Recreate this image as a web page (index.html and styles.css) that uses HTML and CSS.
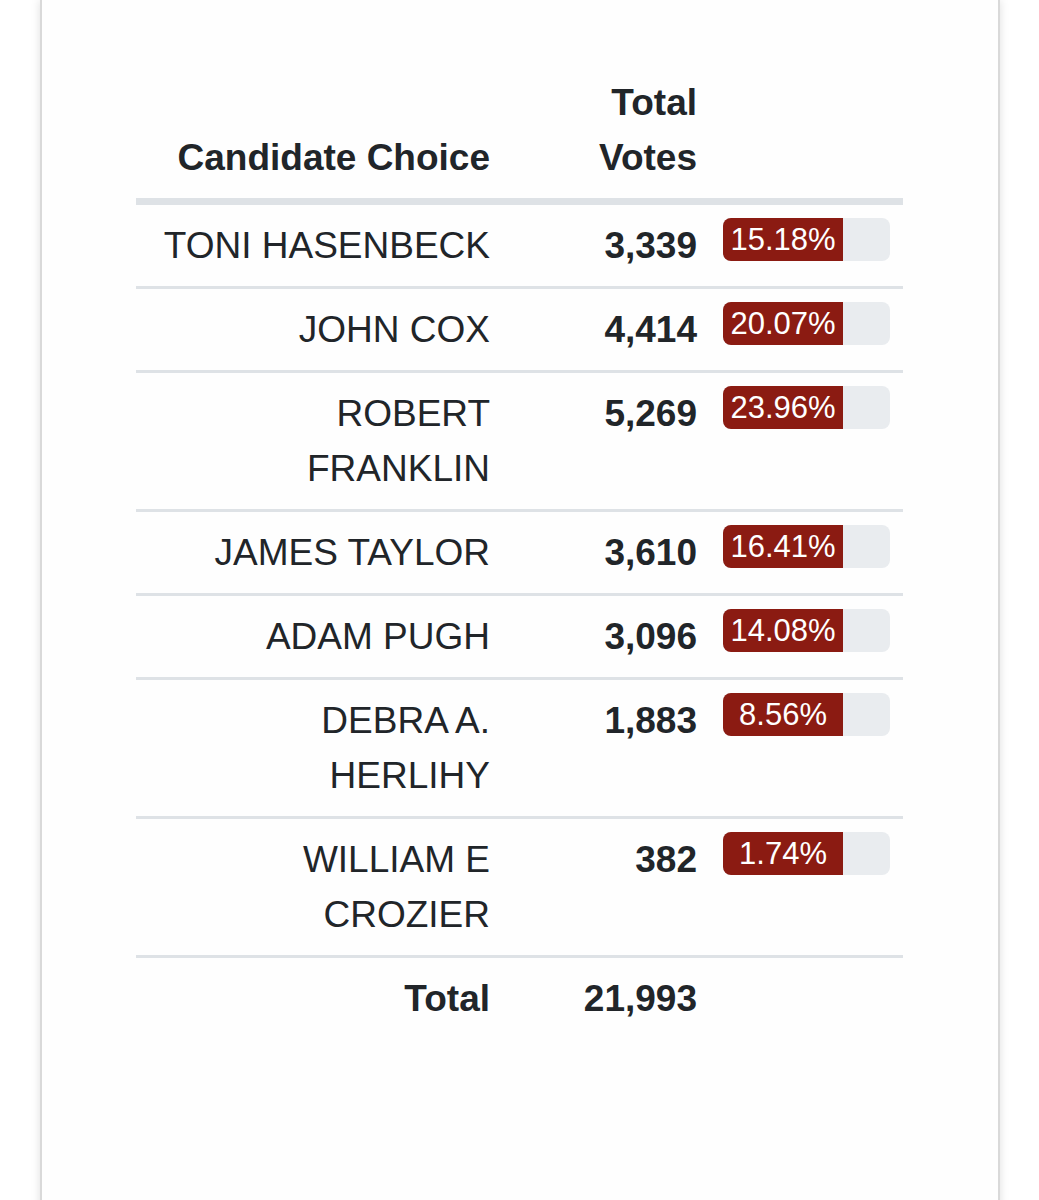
FILE: index.html
```html
<!DOCTYPE html>
<html lang="en">
<head>
<meta charset="utf-8">
<title>Candidate Choice Results</title>
<link rel="stylesheet" href="styles.css">
</head>
<body>
<div class="card">
  <table class="results">
    <colgroup>
      <col class="col-name">
      <col class="col-votes">
      <col class="col-bar">
    </colgroup>
    <thead>
      <tr>
        <th class="name">Candidate Choice</th>
        <th class="votes">Total Votes</th>
        <th class="bar"></th>
      </tr>
    </thead>
    <tbody>
      <tr>
        <td class="name">TONI HASENBECK</td>
        <td class="votes">3,339</td>
        <td class="bar"><div class="progress"><div class="progress-fill" style="width:15.18%">15.18%</div></div></td>
      </tr>
      <tr>
        <td class="name">JOHN COX</td>
        <td class="votes">4,414</td>
        <td class="bar"><div class="progress"><div class="progress-fill" style="width:20.07%">20.07%</div></div></td>
      </tr>
      <tr>
        <td class="name">ROBERT FRANKLIN</td>
        <td class="votes">5,269</td>
        <td class="bar"><div class="progress"><div class="progress-fill" style="width:23.96%">23.96%</div></div></td>
      </tr>
      <tr>
        <td class="name">JAMES TAYLOR</td>
        <td class="votes">3,610</td>
        <td class="bar"><div class="progress"><div class="progress-fill" style="width:16.41%">16.41%</div></div></td>
      </tr>
      <tr>
        <td class="name">ADAM PUGH</td>
        <td class="votes">3,096</td>
        <td class="bar"><div class="progress"><div class="progress-fill" style="width:14.08%">14.08%</div></div></td>
      </tr>
      <tr>
        <td class="name">DEBRA A. HERLIHY</td>
        <td class="votes">1,883</td>
        <td class="bar"><div class="progress"><div class="progress-fill" style="width:8.56%">8.56%</div></div></td>
      </tr>
      <tr>
        <td class="name">WILLIAM E CROZIER</td>
        <td class="votes">382</td>
        <td class="bar"><div class="progress"><div class="progress-fill" style="width:1.74%">1.74%</div></div></td>
      </tr>
    </tbody>
    <tfoot>
      <tr>
        <td class="name total-label">Total</td>
        <td class="votes">21,993</td>
        <td class="bar"></td>
      </tr>
    </tfoot>
  </table>
</div>
</body>
</html>
```
FILE: styles.css
```css
html, body {
  margin: 0;
  padding: 0;
  background: #ffffff;
}

body {
  font-family: "Liberation Sans", Arial, Helvetica, sans-serif;
  color: #212529;
  overflow: hidden;
}

.card {
  box-sizing: border-box;
  width: 960px;
  min-height: 1220px;
  margin-left: 40px;
  padding-top: 62px;
  background: #fefefe;
  border-left: 2px solid #d9d9d9;
  border-right: 2px solid #d9d9d9;
  box-shadow: 0 0 9px rgba(0, 0, 0, 0.13);
}

.results {
  table-layout: fixed;
  border-collapse: separate;
  border-spacing: 0;
  width: 767px;
  margin-left: 94px;
  font-size: 37px;
  line-height: 55px;
}

.col-name { width: 367px; }
.col-votes { width: 207px; }
.col-bar { width: 193px; }

.results th,
.results td {
  padding: 13px;
  vertical-align: top;
}

.results th {
  font-weight: 700;
  vertical-align: bottom;
  border-bottom: 7px solid #dee2e6;
}

.results tbody tr + tr td,
.results tfoot td {
  border-top: 3px solid #dee2e6;
}

.results .name {
  text-align: right;
  padding-left: 25px;
}

td.votes,
th.votes {
  text-align: right;
  font-weight: 700;
}

.total-label {
  font-weight: 700;
}

.progress {
  display: flex;
  height: 43px;
  background: #e9ecef;
  border-radius: 8px;
  overflow: hidden;
}

.progress-fill {
  min-width: 120px;
  height: 43px;
  background: #8b1b12;
  color: #ffffff;
  font-size: 31px;
  line-height: 43px;
  text-align: center;
  white-space: nowrap;
}
```
